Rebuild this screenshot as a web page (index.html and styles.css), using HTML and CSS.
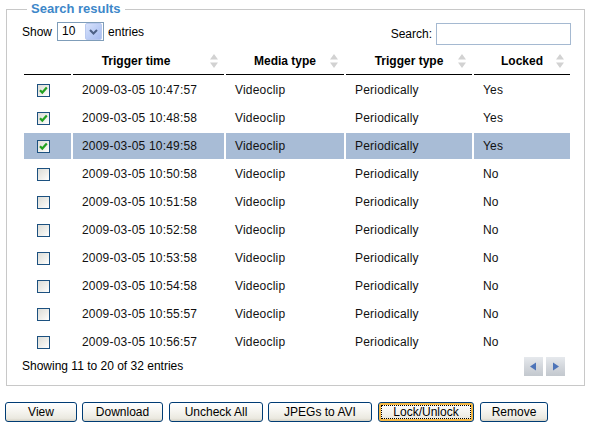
FILE: index.html
```html
<!DOCTYPE html>
<html>
<head>
<meta charset="utf-8">
<link rel="stylesheet" href="styles.css">
</head>
<body>
<fieldset class="results">
  <legend class="results-title">Search results</legend>
  <div class="toolbar">
    <div class="length">
      <span>Show</span>
      <span class="select">
        <span class="select-value">10</span>
        <span class="select-btn"><svg width="15" height="17" viewBox="0 0 15 17"><path d="M4 7 L7.5 10.5 L11 7" fill="none" stroke="#4d6185" stroke-width="2"/></svg></span>
      </span>
      <span>entries</span>
    </div>
    <label class="search"><span>Search:</span><input class="search-input" type="text"></label>
  </div>
  <table class="grid">
    <colgroup>
      <col class="w-check"><col class="w-time"><col class="w-media"><col class="w-trig"><col class="w-lock">
    </colgroup>
    <thead>
      <tr>
        <th class="h-check"></th>
        <th class="sortable h-time">Trigger time<svg class="sort" width="8" height="14" viewBox="0 0 8 14"><path d="M4 0 L8 5.5 L0 5.5 Z M4 14 L8 8.5 L0 8.5 Z" fill="#d2d2d2"/></svg></th>
        <th class="sortable">Media type<svg class="sort" width="8" height="14" viewBox="0 0 8 14"><path d="M4 0 L8 5.5 L0 5.5 Z M4 14 L8 8.5 L0 8.5 Z" fill="#d2d2d2"/></svg></th>
        <th class="sortable">Trigger type<svg class="sort" width="8" height="14" viewBox="0 0 8 14"><path d="M4 0 L8 5.5 L0 5.5 Z M4 14 L8 8.5 L0 8.5 Z" fill="#d2d2d2"/></svg></th>
        <th class="sortable">Locked<svg class="sort" width="8" height="14" viewBox="0 0 8 14"><path d="M4 0 L8 5.5 L0 5.5 Z M4 14 L8 8.5 L0 8.5 Z" fill="#d2d2d2"/></svg></th>
      </tr>
    </thead>
    <tbody>
      <tr><td class="c-check"><span class="cb checked"><svg width="11" height="11" viewBox="0 0 11 11"><path d="M2 5.2 L4.3 7.6 L8.8 2.6" fill="none" stroke="#21a121" stroke-width="2.2"/></svg></span></td><td>2009-03-05 10:47:57</td><td>Videoclip</td><td>Periodically</td><td>Yes</td></tr>
      <tr><td class="c-check"><span class="cb checked"><svg width="11" height="11" viewBox="0 0 11 11"><path d="M2 5.2 L4.3 7.6 L8.8 2.6" fill="none" stroke="#21a121" stroke-width="2.2"/></svg></span></td><td>2009-03-05 10:48:58</td><td>Videoclip</td><td>Periodically</td><td>Yes</td></tr>
      <tr class="selected"><td class="c-check"><span class="cb checked"><svg width="11" height="11" viewBox="0 0 11 11"><path d="M2 5.2 L4.3 7.6 L8.8 2.6" fill="none" stroke="#21a121" stroke-width="2.2"/></svg></span></td><td>2009-03-05 10:49:58</td><td>Videoclip</td><td>Periodically</td><td>Yes</td></tr>
      <tr><td class="c-check"><span class="cb"></span></td><td>2009-03-05 10:50:58</td><td>Videoclip</td><td>Periodically</td><td>No</td></tr>
      <tr><td class="c-check"><span class="cb"></span></td><td>2009-03-05 10:51:58</td><td>Videoclip</td><td>Periodically</td><td>No</td></tr>
      <tr><td class="c-check"><span class="cb"></span></td><td>2009-03-05 10:52:58</td><td>Videoclip</td><td>Periodically</td><td>No</td></tr>
      <tr><td class="c-check"><span class="cb"></span></td><td>2009-03-05 10:53:58</td><td>Videoclip</td><td>Periodically</td><td>No</td></tr>
      <tr><td class="c-check"><span class="cb"></span></td><td>2009-03-05 10:54:58</td><td>Videoclip</td><td>Periodically</td><td>No</td></tr>
      <tr><td class="c-check"><span class="cb"></span></td><td>2009-03-05 10:55:57</td><td>Videoclip</td><td>Periodically</td><td>No</td></tr>
      <tr><td class="c-check"><span class="cb"></span></td><td>2009-03-05 10:56:57</td><td>Videoclip</td><td>Periodically</td><td>No</td></tr>
    </tbody>
  </table>
  <div class="footer">
    <span>Showing 11 to 20 of 32 entries</span>
    <div class="pager">
      <span class="pg"><svg width="19" height="19" viewBox="0 0 19 19"><path d="M6 9.5 L12 5.5 L12 13.5 Z" fill="#4d74b8"/></svg></span>
      <span class="pg"><svg width="19" height="19" viewBox="0 0 19 19"><path d="M13 9.5 L7 5.5 L7 13.5 Z" fill="#4d74b8"/></svg></span>
    </div>
  </div>
</fieldset>
<div class="actions">
  <button class="btn b-view">View</button>
  <button class="btn b-download">Download</button>
  <button class="btn b-uncheck">Uncheck All</button>
  <button class="btn b-jpeg">JPEGs to AVI</button>
  <button class="btn b-lock focused">Lock/Unlock</button>
  <button class="btn b-remove">Remove</button>
</div>
</body>
</html>
```

FILE: styles.css
```css
html, body {
  margin: 0;
  padding: 0;
  background: #fff;
}
body {
  font-family: "Liberation Sans", Arial, sans-serif;
  font-size: 12px;
  color: #000;
  padding-top: 1px;
}
.results {
  margin: 0 6px;
  padding: 0 12px 9px 15px;
  border: 1px solid #c8c8c8;
  min-inline-size: 0;
}
.results-title {
  margin-left: 5px;
  padding: 0 4px;
  font-weight: bold;
  font-size: 13px;
  line-height: 16px;
  color: #3d87c9;
}
.toolbar {
  display: flex;
  justify-content: space-between;
  align-items: flex-start;
  margin-top: 5px;
  height: 22px;
}
.length {
  display: flex;
  align-items: center;
  height: 19px;
  gap: 4px;
}
.select {
  display: flex;
  align-items: center;
  width: 45px;
  height: 17px;
  border: 1px solid #7f9db9;
  background: #fff;
  margin-left: 1px;
}
.select-value {
  flex: 1;
  padding-left: 4px;
  line-height: 17px;
}
.select-btn {
  width: 15px;
  height: 15px;
  margin-right: 1px;
  border: 1px solid #b9c9ef;
  border-radius: 2px;
  background: linear-gradient(135deg, #d7e2fb 0%, #b9cbf5 60%, #a9bcee 100%);
  display: flex;
  align-items: center;
  justify-content: center;
  overflow: hidden;
}
.select-btn svg {
  display: block;
}
.search {
  display: flex;
  align-items: center;
  gap: 4px;
  height: 22px;
  margin-top: 1px;
}
.search-input {
  box-sizing: border-box;
  width: 135px;
  height: 22px;
  margin: -1px 1px 0 0;
  border: 1px solid #a5b9d1;
  padding: 0 3px;
  font: inherit;
}
.grid {
  table-layout: fixed;
  border-collapse: separate;
  border-spacing: 2px;
  width: 550px;
  margin-top: 4px;
}
.w-check { width: 47px; }
.w-time { width: 151px; }
.w-media { width: 118px; }
.w-trig { width: 126px; }
.w-lock { width: 96px; }
.grid th {
  position: relative;
  font-weight: bold;
  text-align: center;
  line-height: 15px;
  padding: 4px 0 5px 0;
  border-bottom: 1px solid #000;
  white-space: nowrap;
}
.grid th.h-time {
  padding-left: 10px;
  padding-right: 35px;
}
.sort {
  position: absolute;
  right: 6px;
  top: 4px;
}
.grid td {
  height: 26px;
  box-sizing: border-box;
  padding: 0 0 0 9px;
  line-height: 16px;
  vertical-align: middle;
  white-space: nowrap;
  color: #111;
  letter-spacing: 0.2px;
}
.grid td.c-check {
  padding-left: 13px;
}
.grid tr.selected td {
  background: #a8bcd6;
}
.cb {
  display: block;
  box-sizing: border-box;
  width: 13px;
  height: 13px;
  border: 1px solid #1c5180;
  background: linear-gradient(135deg, #dcdcd7 0%, #f0f0ec 60%, #ffffff 100%);
  margin-top: 1px;
}
.cb svg {
  display: block;
}
.footer {
  display: flex;
  justify-content: space-between;
  align-items: center;
  height: 20px;
  margin-top: -1px;
}
.pager {
  display: flex;
  gap: 3px;
  margin-right: 7px;
}
.pg {
  display: block;
  width: 19px;
  height: 19px;
  background: linear-gradient(to bottom, #e6e9ed 0%, #d3d7dc 50%, #c3c8ce 100%);
}
.pg svg {
  display: block;
}
.actions {
  display: flex;
  gap: 5px;
  padding-left: 5px;
  margin-top: 16px;
}
.btn {
  box-sizing: border-box;
  height: 20px;
  padding: 0;
  border: 1px solid #003c74;
  border-radius: 3px;
  background: linear-gradient(to bottom, #ffffff 0%, #f6f5f0 45%, #ebe9e0 85%, #d6d3c6 100%);
  font-family: "Liberation Sans", Arial, sans-serif;
  font-size: 12px;
  color: #000;
  line-height: 18px;
}
.b-view { width: 72px; }
.b-download { width: 81px; }
.b-uncheck { width: 94px; margin-left: 1px; }
.b-jpeg { width: 104px; }
.b-lock { width: 96px; margin-left: 1px; }
.b-remove { width: 68px; margin-left: 1px; }
.btn.focused {
  box-shadow: inset 0 0 0 2px #f5b844;
  outline: 1px dotted #000;
  outline-offset: -4px;
}
```
